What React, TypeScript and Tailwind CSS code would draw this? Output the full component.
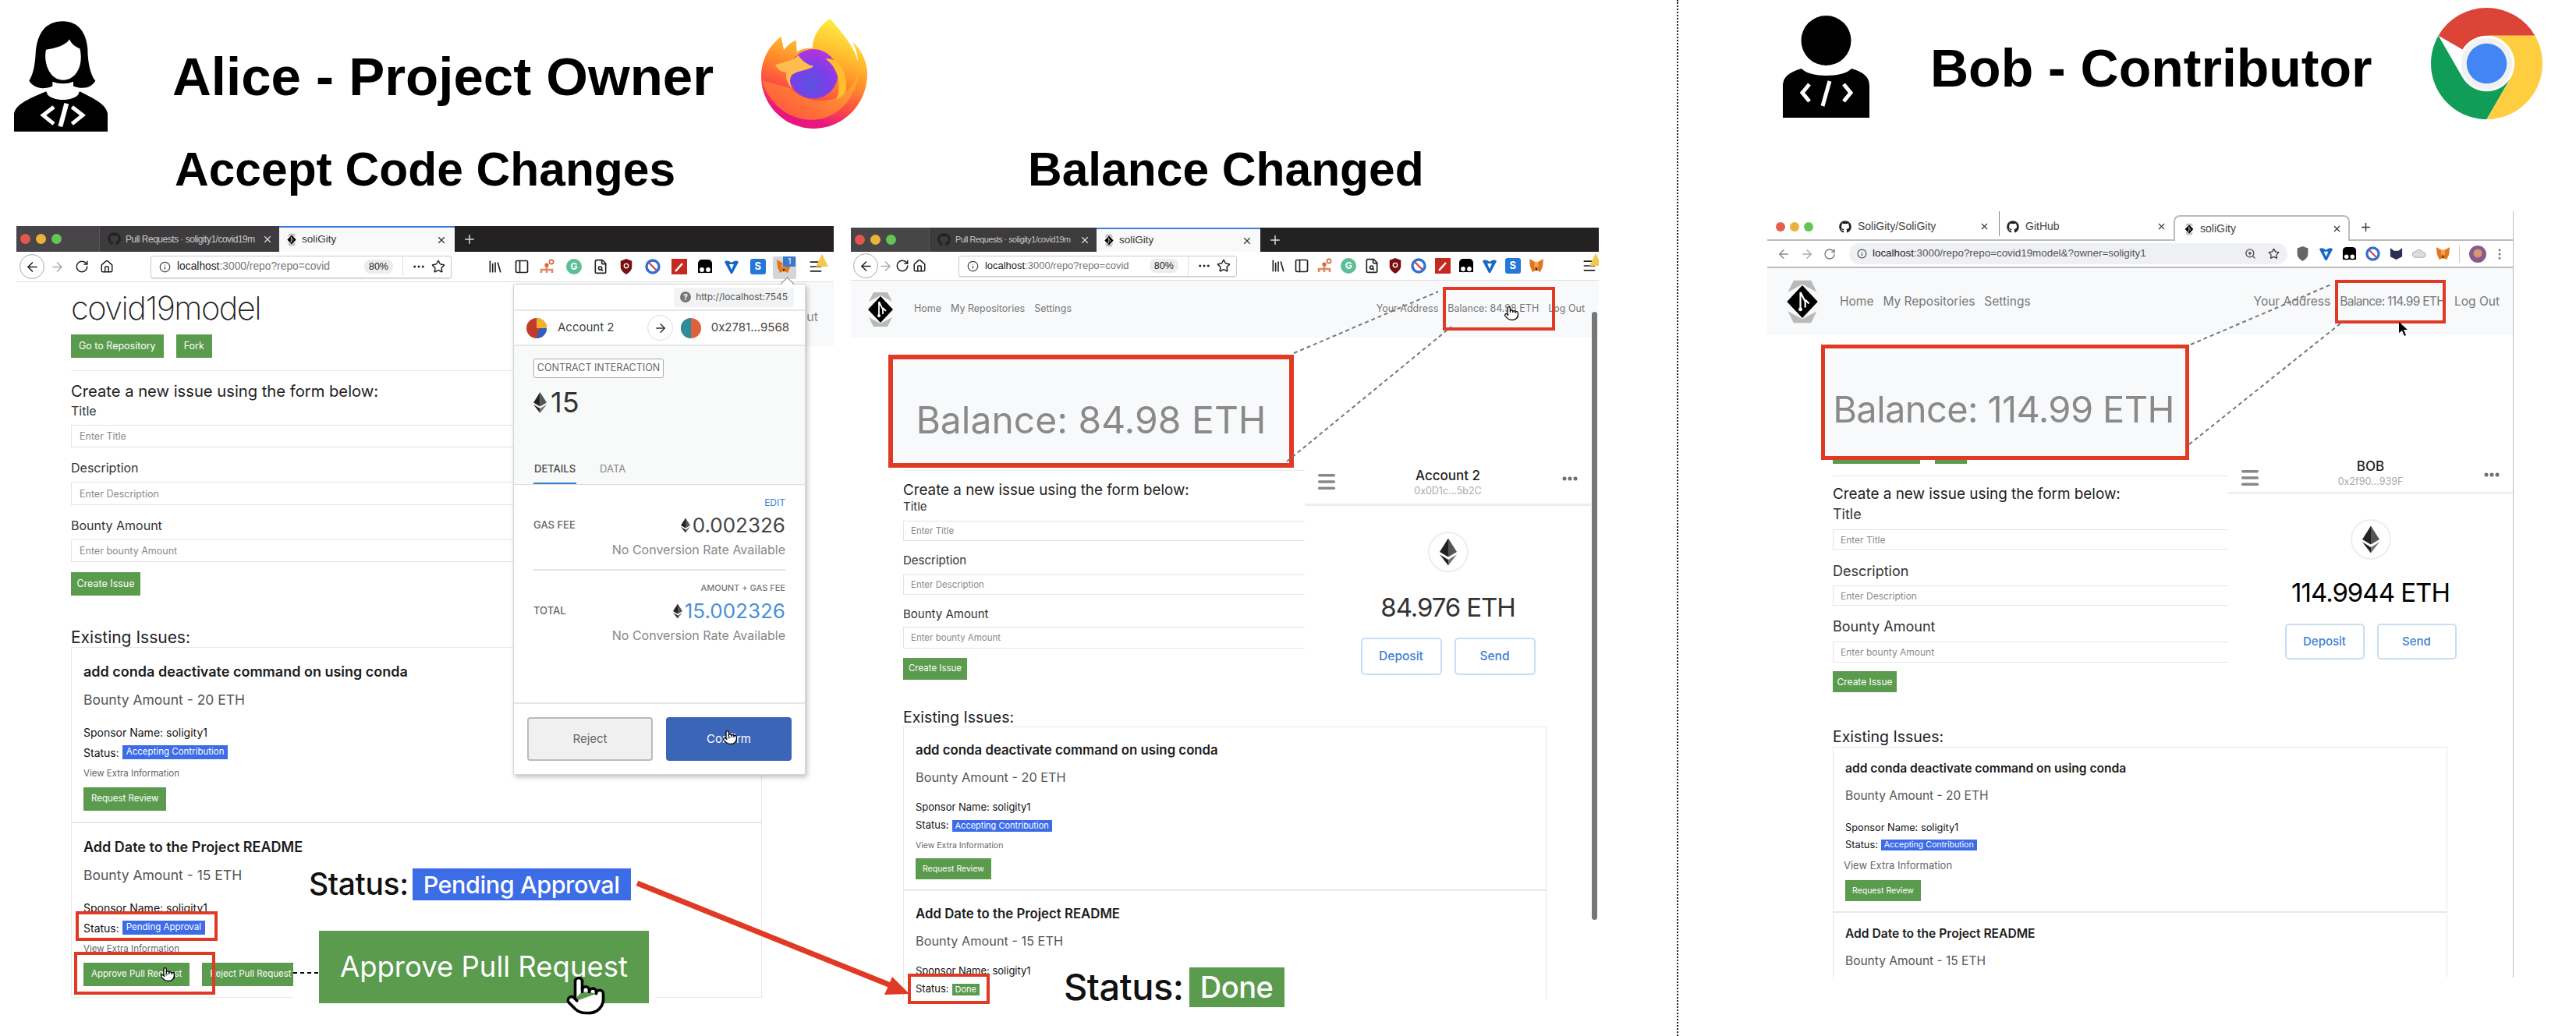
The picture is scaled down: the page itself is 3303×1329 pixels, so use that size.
import { ArrowLeft, ArrowRight, Ellipsis, FileSearch, Home, Info, Library, Menu, MoreVertical, PanelLeft, Plus, Pointer, RotateCw, Star, X, ZoomIn } from 'lucide-react';
import { FaGithub } from 'react-icons/fa';

const GREEN = 'bg-[#5b9b4e]';
const BLUE = 'bg-[#3c6ce6]';

// per window text and spacing, the three screenshots were pasted at different scales
const leftScale = {
  heading: 'h-[24px] text-[20.2px] mt-[14px]',
  label: 'text-[16px]',
  title: 'h-[26px]',
  input: 'text-[12.5px] pl-[10px]',
  in1: 'mt-[5px] h-[29px]',
  l2: 'mt-[13px] h-[26px]',
  in2: 'mt-[5px] h-[30px]',
  l3: 'mt-[13px] h-[26px]',
  in3: 'mt-[5px] h-[29px]',
  create: 'mt-[13px] h-[30px] w-[89px] text-[12.5px]',
  existing: 'mt-[42px] h-[24px] text-[21px]',
};
const midScale = {
  heading: 'h-[22px] text-[18.8px] mt-[14px]',
  label: 'text-[15px]',
  title: 'h-[20px]',
  input: 'text-[11.5px] pl-[9px]',
  in1: 'mt-[8px] h-[26px]',
  l2: 'mt-[15px] h-[20px]',
  in2: 'mt-[8px] h-[26px]',
  l3: 'mt-[15px] h-[20px]',
  in3: 'mt-[6px] h-[28px]',
  create: 'mt-[12px] h-[28px] w-[82px] text-[11.5px]',
  existing: 'mt-[38px] h-[22px] text-[19.5px]',
};
const rightScale = {
  heading: 'h-[24px] text-[18.9px] mt-[11px]',
  label: 'text-[18px]',
  title: 'h-[26px]',
  input: 'text-[12px] pl-[9px]',
  in1: 'mt-[7px] h-[26px]',
  l2: 'mt-[14px] h-[26px]',
  in2: 'mt-[6px] h-[26px]',
  l3: 'mt-[13px] h-[26px]',
  in3: 'mt-[7px] h-[27px]',
  create: 'mt-[11px] h-[27px] w-[82px] text-[12px]',
  existing: 'mt-[46px] h-[24px] text-[19.5px]',
};

const leftCard = {
  box: 'h-[225px] pl-[15px] pt-[18px]',
  title: 'h-[24px] text-[18px]',
  bounty: 'mt-[13px] h-[24px] text-[17.5px]',
  sponsor: 'mt-[18px] h-[22px] text-[14px]',
  status: 'mt-[4px] h-[22px] text-[14px]',
  badge: 'text-[11.5px] px-[5px] h-[18px]',
  view: 'mt-[7px] h-[20px] text-[11.5px]',
  btnRow: 'mt-[7px] h-[30px]',
  btn: 'text-[11.5px] px-[10px]',
};
const midCard = {
  box: 'h-[210px] pl-[15px] pt-[18px]',
  title: 'h-[24px] text-[16.8px]',
  bounty: 'mt-[10px] h-[24px] text-[16.3px]',
  sponsor: 'mt-[16px] h-[22px] text-[13px]',
  status: 'mt-[1px] h-[22px] text-[13px]',
  badge: 'text-[11px] px-[4px] h-[15px]',
  view: 'mt-[5px] h-[20px] text-[10.5px]',
  btnRow: 'mt-[6px] h-[27px]',
  btn: 'text-[10.5px] px-[9px]',
};
const rightCard = {
  box: 'h-[212px] pl-[15px] pt-[15px]',
  title: 'h-[24px] text-[15.6px]',
  bounty: 'mt-[11px] h-[24px] text-[15.5px]',
  sponsor: 'mt-[18px] h-[22px] text-[12.8px]',
  status: 'mt-0 h-[22px] text-[12.8px]',
  badge: 'text-[10.5px] px-[4px] h-[14px]',
  view: 'mt-[6px] h-[20px] text-[13px] -ml-[2px]',
  btnRow: 'mt-[8px] h-[27px]',
  btn: 'text-[10.5px] px-[9px]',
};

type CardScale = typeof leftCard;
type FormScale = typeof leftScale;

function Logo({ className }: { className: string }) {
  return (
    <svg viewBox="0 0 34 48" className={className}>
      <polygon points="8,2 26,2 32,14 17,6 2,14" fill="#b9b9b9" />
      <polygon points="2,34 17,42 32,34 26,46 8,46" fill="#b9b9b9" />
      <polygon points="17,7 33,24 17,41 1,24" fill="#000" />
      <path d="M15 14 L20 24 V30 M15 14 V32 M20 22 L24 26" stroke="#fff" strokeWidth="1.8" fill="none" />
      <circle cx="15" cy="32" r="2" fill="#fff" />
    </svg>
  );
}

function EthMark({ className, dark = '#222' }: { className: string; dark?: string }) {
  return (
    <svg viewBox="0 0 20 32" className={className}>
      <polygon points="10,0 0,16 10,22" fill={dark} />
      <polygon points="10,0 20,16 10,22" fill="#555" />
      <polygon points="0,19 10,32 10,25" fill={dark} />
      <polygon points="20,19 10,32 10,25" fill="#777" />
    </svg>
  );
}

function Fox({ className }: { className: string }) {
  return (
    <svg viewBox="0 0 20 20" className={className}>
      <polygon points="1,1 8,5 12,5 19,1 18,11 15,18 11,16 9,16 5,18 2,11" fill="#e2761b" />
      <polygon points="8,5 12,5 13,11 7,11" fill="#f6a45c" />
      <polygon points="9,16 11,16 11,13 9,13" fill="#3a2a1d" />
    </svg>
  );
}

function Ghost({ className }: { className: string }) {
  return (
    <svg viewBox="0 0 20 20" className={className}>
      <path d="M1 18 V6 a5 5 0 0 1 5 -5 H14 a5 5 0 0 1 5 5 V18Z" fill="#000" />
      <circle cx="6" cy="14" r="3.6" fill="#fff" stroke="#000" strokeWidth="1.4" />
      <circle cx="14" cy="14" r="3.6" fill="#fff" stroke="#000" strokeWidth="1.4" />
    </svg>
  );
}

function BanMark({ className }: { className: string }) {
  return (
    <svg viewBox="0 0 20 20" className={className}>
      <circle cx="10" cy="10" r="8" fill="#fff" stroke="#2f6fd0" strokeWidth="3.4" />
      <path d="M5 5 L15 15" stroke="#c94f5a" strokeWidth="2.4" />
    </svg>
  );
}

function Gem({ className }: { className: string }) {
  return (
    <svg viewBox="0 0 20 20" className={className}>
      <path d="M1 4 C4 1 7 3 10 5 C13 3 16 1 19 4 L11 19 H9Z" fill="#1668c7" />
      <path d="M7 7 L10 14 L13 7Z" fill="#fff" />
    </svg>
  );
}

function AliceIcon() {
  return (
    <svg viewBox="52 35 360 425" className="mt-[27px] h-[142px] w-[120px] shrink-0">
      <path d="M240 35 C170 35 140 85 135 160 C132 210 125 240 110 265 C130 295 165 300 200 285 L280 285 C320 300 350 290 365 265 C345 240 335 190 335 140 C330 80 300 35 240 35Z" fill="#000" />
      <path d="M52 460 V390 C60 350 120 330 175 305 C200 345 280 345 305 305 C350 330 405 350 412 390 V460Z" fill="#000" />
      <path d="M265 105 C250 130 205 140 175 145 C165 190 185 260 240 262 C295 260 320 200 305 140 C290 135 275 125 265 105Z" fill="#fff" />
      <path d="M200 268 C225 278 255 278 280 268 L280 300 L302 314 C280 345 200 345 178 314 L200 300Z" fill="#fff" />
      <path d="M205 365 L164 397 L205 430 M275 365 L316 397 L275 430" stroke="#fff" strokeWidth="15" fill="none" />
      <path d="M254 352 L230 440" stroke="#fff" strokeWidth="18" />
    </svg>
  );
}

function BobIcon() {
  return (
    <svg viewBox="0 0 111 131" className="mt-[20px] h-[131px] w-[111px] shrink-0">
      <ellipse cx="55.5" cy="32" rx="32" ry="32" fill="#000" />
      <path d="M0 131 V90 C0 78 10 72 24 68 C34 80 78 80 88 68 C102 72 111 78 111 90 V131Z" fill="#000" />
      <path d="M34 88 L25 99 L34 110 M78 88 L87 99 L78 110" stroke="#fff" strokeWidth="5" fill="none" />
      <path d="M60 84 L51 116" stroke="#fff" strokeWidth="5" />
    </svg>
  );
}

function FirefoxLogo() {
  return (
    <svg viewBox="48 28 407 422" className="mt-[24px] h-[141px] w-[136px] shrink-0">
      <defs>
        <linearGradient id="ffOuter" x1="0.72" y1="0" x2="0.38" y2="1">
          <stop offset="0" stopColor="#fff044" />
          <stop offset="0.28" stopColor="#ffc02e" />
          <stop offset="0.5" stopColor="#ff8a2a" />
          <stop offset="0.72" stopColor="#ff4a45" />
          <stop offset="0.9" stopColor="#e8177f" />
        </linearGradient>
        <radialGradient id="ffBall" cx="0.45" cy="0.72" r="0.75">
          <stop offset="0" stopColor="#5a52e0" />
          <stop offset="0.5" stopColor="#7a3fe8" />
          <stop offset="1" stopColor="#bb33dd" />
        </radialGradient>
        <linearGradient id="ffSwoosh" x1="0.9" y1="0.1" x2="0.2" y2="0.9">
          <stop offset="0" stopColor="#ffb52e" />
          <stop offset="1" stopColor="#ff5a3c" />
        </linearGradient>
      </defs>
      <path d="M125 97 C85 125 48 180 48 250 C48 360 140 450 250 450 C360 450 455 360 455 240 C455 190 430 145 400 118 C412 150 420 170 418 190 C415 170 395 120 312 28 C270 55 245 100 245 140 C220 140 200 145 185 155 L182 110 C160 120 145 135 135 148Z" fill="url(#ffOuter)" />
      <path d="M52 265 C75 350 150 418 245 416 C350 414 430 320 428 180 C425 260 395 300 340 330 C300 350 210 350 160 295Z" fill="url(#ffSwoosh)" />
      <circle cx="248" cy="240" r="95" fill="url(#ffBall)" />
      <path d="M295 182 C335 175 378 215 374 300 C368 320 352 332 335 338 C356 300 352 222 295 182Z" fill="#ffbe2e" />
      <path d="M102 205 C130 195 170 192 190 168 C205 190 225 205 250 210 C230 228 190 225 165 245 C155 260 158 280 168 298 C150 280 138 252 146 234 C125 234 110 222 102 205Z" fill="#ffbd4f" />
    </svg>
  );
}

function ChromeLogo() {
  return (
    <svg viewBox="0 0 100 100" className="mt-[10px] h-[143px] w-[145px] shrink-0">
      <path d="M50 0 A50 50 0 0 1 93.3 25 H50 A25 25 0 0 0 28.3 37.5 L6.7 25 A50 50 0 0 1 50 0Z" fill="#db4437" />
      <path d="M6.7 25 A50 50 0 0 0 50 100 L71.65 62.5 A25 25 0 0 1 28.35 62.5Z" fill="#0f9d58" />
      <path d="M93.3 25 H50 A25 25 0 0 1 71.65 62.5 L50 100 A50 50 0 0 0 93.3 25Z" fill="#ffcd40" />
      <circle cx="50" cy="50" r="23" fill="#f1f1f1" />
      <circle cx="50" cy="50" r="18" fill="#4285f4" />
    </svg>
  );
}

function FirefoxTabs({ height, dots, tabW, tabText, activeW }: { height: string; dots: string; tabW: string; tabText: string; activeW: string }) {
  return (
    <div className={`flex items-stretch bg-[#232122] ${height}`}>
      <div className={`flex items-center gap-[7px] border-r border-[#555] bg-[#484548] pl-[5px] ${dots}`}>
        <span className="size-[13px] rounded-full bg-[#e2564f]" />
        <span className="size-[13px] rounded-full bg-[#e9b23c]" />
        <span className="size-[13px] rounded-full bg-[#62c554]" />
      </div>
      <div className={`flex items-center gap-[6px] bg-[#3d3b3d] pl-[10px] pr-[8px] ${tabW}`}>
        <FaGithub className="size-[17px] shrink-0 text-[#222]" />
        <span className={`flex-1 whitespace-nowrap tracking-[-0.5px] text-[#c9c9c9] [font-family:'Liberation_Sans'] ${tabText}`}>Pull Requests · soligity1/covid19m</span>
        <X className="size-[14px] shrink-0 text-[#ddd]" />
      </div>
      <div className={`flex items-center gap-[7px] border-t-[2px] border-[#3f7be5] bg-[#f9f9fa] pl-[10px] pr-[10px] ${activeW}`}>
        <Logo className="h-[17px] w-[12px] shrink-0" />
        <span className="flex-1 text-[13.5px] text-[#333] [font-family:'Liberation_Sans']">soliGity</span>
        <X className="size-[14px] shrink-0 text-[#333]" />
      </div>
      <div className="flex items-center pl-[10px]">
        <Plus className="size-[18px] text-[#ddd]" />
      </div>
    </div>
  );
}

function FirefoxExtensions({ cell, badge }: { cell: string; badge?: boolean }) {
  const icon = 'size-[20px]';
  return (
    <>
      <div className={`flex justify-center ${cell}`}><Library className={`${icon} text-[#222]`} /></div>
      <div className={`flex justify-center ${cell}`}><PanelLeft className={`${icon} text-[#222]`} /></div>
      <div className={`flex justify-center ${cell}`}>
        <svg viewBox="0 0 20 20" className={icon}><circle cx="15" cy="4" r="2.6" fill="none" stroke="#d9653b" strokeWidth="1.6" /><circle cx="9" cy="8" r="2.6" fill="#d9653b" /><path d="M2 18 V14 H16 V18 M9 10 V18 M5 18 h0" stroke="#e08a65" strokeWidth="2.6" fill="none" /></svg>
      </div>
      <div className={`flex justify-center ${cell}`}><span className="flex size-[20px] items-center justify-center rounded-full bg-[#5cbf95] text-[12px] font-bold text-white">G</span></div>
      <div className={`flex justify-center ${cell}`}><FileSearch className={`${icon} text-[#222]`} /></div>
      <div className={`flex justify-center ${cell}`}>
        <svg viewBox="0 0 20 22" className={icon}><path d="M10 0 L18 3 V11 C18 17 13 20 10 22 C7 20 2 17 2 11 V3Z" fill="#7a0f0f" /><circle cx="10" cy="10" r="3" fill="none" stroke="#fff" strokeWidth="1.5" /></svg>
      </div>
      <div className={`flex justify-center ${cell}`}><BanMark className={icon} /></div>
      <div className={`flex justify-center ${cell}`}>
        <svg viewBox="0 0 20 20" className={icon}><rect width="20" height="20" fill="#c52a21" /><path d="M5 16 L14 6" stroke="#fff" strokeWidth="2.5" /></svg>
      </div>
      <div className={`flex justify-center ${cell}`}><Ghost className={icon} /></div>
      <div className={`flex justify-center ${cell}`}><Gem className={icon} /></div>
      <div className={`flex justify-center ${cell}`}><span className="flex size-[20px] items-center justify-center rounded-[3px] bg-[#2477d6] text-[13px] font-bold text-white">S</span></div>
      <div className={`relative flex justify-center ${cell}`}>
        {badge && <span className="absolute -top-[3px] left-[2px] h-[29px] w-[30px] rounded-[3px] bg-[#d5d6d8]" />}
        <Fox className={`relative ${icon}`} />
        {badge && <span className="absolute -top-[3px] right-[2px] h-[13px] w-[16px] bg-[#3b78c9] text-center text-[10px] leading-[13px] text-white">1</span>}
      </div>
    </>
  );
}

function FirefoxToolbar({ box, navCell, urlBar, urlText, urlGap, extCell, menuGap, badge }: { box: string; navCell: string; urlBar: string; urlText: string; urlGap: string; extCell: string; menuGap: string; badge?: boolean }) {
  return (
    <div className={`flex items-center border-b border-[#dedede] bg-white pl-[4px] ${box}`}>
      <div className={`flex justify-center ${navCell}`}>
        <span className="flex size-[32px] shrink-0 items-center justify-center rounded-full border border-[#aaa]"><ArrowLeft className="size-[19px] text-[#222]" /></span>
      </div>
      <div className={`flex justify-center ${navCell}`}><ArrowRight className="size-[19px] text-[#aaa]" /></div>
      <div className={`flex justify-center ${navCell}`}><RotateCw className="size-[18px] text-[#222]" /></div>
      <div className={`flex justify-center ${navCell}`}><Home className="size-[18px] text-[#222]" /></div>
      <div className={`flex items-center rounded-[3px] border border-[#ccc] pl-[10px] pr-[7px] shadow-[0_1px_1px_#ddd] ${urlBar}`}>
        <Info className="size-[15px] shrink-0 text-[#444]" />
        <span className={`ml-[8px] flex-1 whitespace-nowrap text-[#222] [font-family:'Liberation_Sans'] ${urlText}`}>localhost<span className="text-[#777]">:3000/repo?repo=covid</span></span>
        <span className="rounded-[8px] bg-[#ececec] px-[6px] text-[12.5px] text-[#222] [font-family:'Liberation_Sans']">80%</span>
        <span className="ml-[12px] h-[24px] border-l border-[#ddd]" />
        <Ellipsis className="ml-[11px] size-[18px] text-[#222]" />
        <Star className="ml-[7px] size-[18px] text-[#222]" />
      </div>
      <div className={urlGap} />
      <FirefoxExtensions cell={extCell} badge={badge} />
      <div className={`relative flex justify-center ${menuGap}`}>
        <Menu className="size-[20px] text-[#222]" />
        <svg viewBox="0 0 16 16" className="absolute -top-[6px] left-[12px] size-[16px]"><polygon points="8,0 16,16 0,16" fill="#f4c84a" /></svg>
      </div>
    </div>
  );
}

function SiteNav({ box, logo, links, balance, balanceText }: { box: string; logo: string; links: string; balance: string; balanceText: string }) {
  return (
    <div className={`flex items-center bg-[#f8f9fa] whitespace-nowrap text-[#777] ${box} ${links}`}>
      <Logo className={logo} />
      <span>Home</span>
      <span>My Repositories</span>
      <span>Settings</span>
      <span className="ml-auto">Your Address</span>
      <span className={balanceText}>{balance}</span>
      <span>Log Out</span>
    </div>
  );
}

function Field({ label, labelBox, labelText, inputBox, inputText, placeholder }: { label: string; labelBox: string; labelText: string; inputBox: string; inputText: string; placeholder: string }) {
  return (
    <>
      <div className={`flex items-center text-[#333] ${labelBox} ${labelText}`}>{label}</div>
      <input readOnly placeholder={placeholder} className={`block w-full border border-[#e4e4e4] bg-white outline-none placeholder:text-[#8a8a8a] ${inputBox} ${inputText}`} />
    </>
  );
}

function IssueForm({ s }: { s: FormScale }) {
  return (
    <>
      <div className={`flex items-center text-[#222] ${s.heading}`}>Create a new issue using the form below:</div>
      <Field label="Title" labelBox={s.title} labelText={s.label} inputBox={s.in1} inputText={s.input} placeholder="Enter Title" />
      <Field label="Description" labelBox={s.l2} labelText={s.label} inputBox={s.in2} inputText={s.input} placeholder="Enter Description" />
      <Field label="Bounty Amount" labelBox={s.l3} labelText={s.label} inputBox={s.in3} inputText={s.input} placeholder="Enter bounty Amount" />
      <div className={`flex items-center justify-center text-white ${GREEN} ${s.create}`}>Create Issue</div>
      <div className={`flex items-center text-[#222] ${s.existing}`}>Existing Issues:</div>
    </>
  );
}

function IssueCard({ s, name, amount, status, statusClass, clipped, children }: { s: CardScale; name: string; amount: string; status: string; statusClass: string; clipped?: boolean; children?: React.ReactNode }) {
  return (
    <div className={`border border-[#e8e8e8] ${s.box}`}>
      <div className={`flex items-center font-semibold whitespace-nowrap text-[#1c1c1c] ${s.title}`}>{name}</div>
      <div className={`flex items-center text-[#555] ${s.bounty}`}>{amount}</div>
      {!clipped && (
        <>
          <div className={`flex items-center text-[#111] ${s.sponsor}`}>Sponsor Name: soligity1</div>
          <div className={`flex items-center gap-[4px] text-[#111] ${s.status}`}>
            Status:
            <span className={`flex items-center whitespace-nowrap text-white ${statusClass} ${s.badge}`}>{status}</span>
          </div>
          <div className={`flex items-center text-[#666] ${s.view}`}>View Extra Information</div>
          <div className={`flex items-stretch gap-[16px] ${s.btnRow}`}>{children}</div>
        </>
      )}
    </div>
  );
}

function GreenButton({ label, cls }: { label: string; cls: string }) {
  return <span className={`flex items-center whitespace-nowrap text-white ${GREEN} ${cls}`}>{label}</span>;
}

function MetaMaskPopup() {
  return (
    <div className="absolute top-[74px] left-[637px] flex h-[630px] w-[375px] flex-col rounded-[2px] border border-[#d6d6d6] bg-white shadow-[2px_3px_6px_rgba(0,0,0,0.25)]">
      <span className="absolute -top-[7px] left-[344px] size-[13px] rotate-45 border-t border-l border-[#888] bg-white" />
      <div className="flex h-[34px] items-center justify-end border-b-[2px] border-[#e6e6e6] pr-[14px]">
        <span className="flex h-[25px] items-center gap-[6px] rounded-[4px] bg-[#f2f3f4] px-[8px] text-[12px] text-[#555]">
          <span className="flex size-[14px] items-center justify-center rounded-full bg-[#777] text-[10px] font-bold text-white">?</span>
          http://localhost:7545
        </span>
      </div>
      <div className="relative flex h-[45px] items-center border-b-[2px] border-[#e6e6e6] pl-[16px] pr-[20px] text-[15px] text-[#444]">
        <svg viewBox="0 0 26 26" className="size-[26px] shrink-0">
          <circle cx="13" cy="13" r="13" fill="#c23a2b" />
          <path d="M13 0 A13 13 0 0 1 26 13 L13 13Z" fill="#f3b323" />
          <path d="M26 13 A13 13 0 0 1 13 26 L17 13Z" fill="#2b5fc1" />
        </svg>
        <span className="ml-[14px]">Account 2</span>
        <span className="absolute top-[5px] left-[171px] flex size-[33px] items-center justify-center rounded-full border border-[#ddd] bg-white"><ArrowRight className="size-[18px] text-[#333]" /></span>
        <svg viewBox="0 0 26 26" className="ml-auto size-[26px] shrink-0">
          <circle cx="13" cy="13" r="13" fill="#e0603a" />
          <path d="M13 0 A13 13 0 0 0 13 26Z" fill="#2b8f9b" />
        </svg>
        <span className="ml-[13px]">0x2781...9568</span>
      </div>
      <div className="flex h-[177px] flex-col bg-[#f8f9f9] pl-[25px]">
        <span className="mt-[16px] flex h-[25px] w-[167px] items-center justify-center rounded-[3px] border border-[#aaa] bg-white text-[12.5px] whitespace-nowrap text-[#666]">CONTRACT INTERACTION</span>
        <div className="mt-[10px] flex items-center gap-[5px] text-[36px] leading-[42px] text-[#333]">
          <EthMark className="h-[27px] w-[17px]" />
          15
        </div>
        <div className="mt-auto flex gap-[30px] text-[13px]">
          <span className="border-b-[2px] border-[#3b7fd1] px-[1px] pb-[8px] font-medium text-[#444]">DETAILS</span>
          <span className="text-[#888]">DATA</span>
        </div>
      </div>
      <div className="flex flex-1 flex-col border-t border-[#ddd] px-[25px] text-[#888]">
        <div className="mt-[15px] text-right text-[12px] leading-[16px] text-[#3b7fd1]">EDIT</div>
        <div className="mt-[5px] flex items-center justify-between">
          <span className="text-[13px] font-medium text-[#666]">GAS FEE</span>
          <span className="flex items-center gap-[3px] text-[26px] leading-[32px] text-[#444]"><EthMark className="h-[20px] w-[12px]" />0.002326</span>
        </div>
        <div className="mt-[3px] text-right text-[16px] leading-[24px]">No Conversion Rate Available</div>
        <div className="mt-[13px] border-t-[2px] border-[#e4e4e4]" />
        <div className="mt-[15px] text-right text-[11px] leading-[14px] font-medium text-[#777]">AMOUNT + GAS FEE</div>
        <div className="mt-[7px] flex items-center justify-between">
          <span className="text-[13px] font-medium text-[#666]">TOTAL</span>
          <span className="flex items-center gap-[3px] text-[26px] leading-[32px] text-[#4a90d9]"><EthMark className="h-[20px] w-[12px]" />15.002326</span>
        </div>
        <div className="mt-[3px] text-right text-[16px] leading-[24px]">No Conversion Rate Available</div>
      </div>
      <div className="flex h-[92px] items-start gap-[17px] border-t-[2px] border-[#e6e6e6] px-[17px] pt-[17px] text-[15px]">
        <span className="flex h-[56px] w-[162px] items-center justify-center rounded-[4px] border-[2px] border-[#bbb] bg-[#f0f0f0] text-[#666]">Reject</span>
        <span className="relative flex h-[56px] w-[162px] items-center justify-center rounded-[4px] bg-[#3b66b8] text-white">
          Confirm
          <Pointer className="absolute top-[16px] left-[72px] size-[20px] fill-white text-black" strokeWidth={1.5} />
        </span>
      </div>
    </div>
  );
}

function WalletPanel({ box, name, address, balance, nameTop, dial, balanceText, buttons, btn }: { box: string; name: string; address: string; balance: string; nameTop: string; dial: string; balanceText: string; buttons: string; btn: string }) {
  return (
    <div className={`absolute flex flex-col items-center bg-white ${box}`}>
      <div className={`relative flex w-full flex-col items-center border-b-[3px] border-[#eee] ${nameTop}`}>
        <Menu className="absolute top-[12px] left-[14px] size-[28px] text-[#888]" strokeWidth={3} />
        <span className="text-[17px] leading-[22px] font-medium text-[#222]">{name}</span>
        <span className="text-[12.5px] leading-[18px] text-[#aaa]">{address}</span>
        <Ellipsis className="absolute top-[10px] right-[15px] size-[24px] text-[#666]" strokeWidth={3} />
      </div>
      <span className={`flex size-[52px] items-center justify-center rounded-full border-[2px] border-[#eee] ${dial}`}>
        <EthMark className="h-[36px] w-[22px]" />
      </span>
      <div className={`whitespace-nowrap ${balanceText}`}>{balance}</div>
      <div className={`flex gap-[16px] ${buttons}`}>
        <span className={`flex items-center justify-center rounded-[5px] border-[2px] border-[#c9def2] font-medium text-[#3b7fd1] ${btn}`}>Deposit</span>
        <span className={`flex items-center justify-center rounded-[5px] border-[2px] border-[#c9def2] font-medium text-[#3b7fd1] ${btn}`}>Send</span>
      </div>
    </div>
  );
}

function RedBox({ className }: { className: string }) {
  return <div className={`absolute border-[#e03a25] ${className}`} />;
}

function Overlay() {
  const red = '#e03a25';
  return (
    <svg viewBox="0 0 3303 1329" className="pointer-events-none absolute top-0 left-0 h-[1329px] w-[3303px]">
      <line x1="817" y1="1133" x2="1142" y2="1264" stroke={red} strokeWidth="7" />
      <polygon points="1134,1276 1166,1275 1144,1253" fill={red} />
      <line x1="376" y1="1248" x2="408" y2="1248" stroke="#000" strokeWidth="2" strokeDasharray="5 4" />
      <g stroke="#777" strokeWidth="2" strokeDasharray="5 4">
        <line x1="1659" y1="453" x2="1844" y2="374" />
        <line x1="1650" y1="592" x2="1861" y2="419" />
        <line x1="2809" y1="442" x2="2989" y2="365" />
        <line x1="2807" y1="570" x2="3006" y2="411" />
      </g>
    </svg>
  );
}

export default function App() {
  return (
    <div className="relative h-[1329px] w-[3303px] overflow-hidden bg-white font-['Inter',sans-serif]">
      <div className="flex h-full">
        {/* Left half: Alice */}
        <section className="h-full w-[2152px] shrink-0 border-r-[2px] border-dotted border-[#222]">
          <div className="flex h-[170px] w-[1112px] items-start pl-[18px] [font-family:'Liberation_Sans']">
            <AliceIcon />
            <h1 className="mt-[62px] ml-[83px] text-[69px] leading-[74px] font-bold whitespace-nowrap text-black">Alice - Project Owner</h1>
            <div className="ml-auto"><FirefoxLogo /></div>
          </div>
          <div className="flex h-[120px] pt-[22px] text-[60.5px] leading-[50px] font-bold text-black [font-family:'Liberation_Sans']">
            <h2 className="ml-[224px] w-[1094px] whitespace-nowrap">Accept Code Changes</h2>
            <h2 className="whitespace-nowrap">Balance Changed</h2>
          </div>
          <div className="flex items-start gap-[22px] pl-[21px]">
            {/* Firefox window, accept */}
            <div className="relative h-[990px] w-[1048px] shrink-0 overflow-hidden">
              <FirefoxTabs height="h-[33px]" dots="w-[107px]" tabW="w-[230px]" tabText="text-[12px]" activeW="w-[225px]" />
              <FirefoxToolbar box="h-[39px]" navCell="w-[32px]" urlBar="ml-[40px] h-[29px] w-[386px] shrink-0" urlText="text-[13.8px]" urlGap="w-[39px] shrink-0" extCell="w-[33.7px] shrink-0" menuGap="ml-[12px] w-[24px] shrink-0" badge />
              <div className="relative pl-[70px]">
                <div className="absolute top-0 right-0 h-[82px] w-[60px] bg-[#f8f9fa] pr-[20px] text-right text-[16px] leading-[88px] text-[#888]">ut</div>
                <div className="flex h-[67px] items-center text-[41.5px] font-extralight tracking-[-1.5px] text-[#222]">covid19model</div>
                <div className="flex h-[30px] gap-[16px] text-[12.5px]">
                  <GreenButton label="Go to Repository" cls="px-[10px]" />
                  <GreenButton label="Fork" cls="px-[10px]" />
                </div>
                <div className="mt-[16px] w-[886px] border-t border-[#e8e8e8]" />
                <div className="w-[886px]"><IssueForm s={leftScale} /></div>
                <div className="w-[886px]">
                  <IssueCard s={leftCard} name="add conda deactivate command on using conda" amount="Bounty Amount - 20 ETH" status="Accepting Contribution" statusClass={BLUE}>
                    <GreenButton label="Request Review" cls={leftCard.btn} />
                  </IssueCard>
                  <IssueCard s={leftCard} name="Add Date to the Project README" amount="Bounty Amount - 15 ETH" status="Pending Approval" statusClass={BLUE}>
                    <GreenButton label="Approve Pull Request" cls={leftCard.btn} />
                    <GreenButton label="Reject Pull Request" cls={leftCard.btn} />
                  </IssueCard>
                </div>
              </div>
              <MetaMaskPopup />
            </div>
            {/* Firefox window, balance */}
            <div className="relative mt-[2px] h-[990px] w-[959px] shrink-0 overflow-hidden">
              <FirefoxTabs height="h-[31px]" dots="w-[101px]" tabW="w-[214px]" tabText="text-[10.8px]" activeW="w-[210px]" />
              <FirefoxToolbar box="h-[37px]" navCell="w-[30px]" urlBar="ml-[39px] h-[27px] w-[357px] shrink-0" urlText="text-[13px]" urlGap="w-[38px] shrink-0" extCell="w-[30.1px] shrink-0" menuGap="ml-[41px] w-[24px] shrink-0" />
              <SiteNav box="h-[73px] pl-[21px] pr-[18px] gap-[12px]" logo="mr-[14px] h-[48px] w-[34px]" links="text-[12.5px]" balance="Balance: 84.98 ETH" balanceText="" />
              <div className="relative pl-[67px]">
                <div className="mt-[170px] w-[825px] border-t border-[#e8e8e8]" />
                <div className="w-[825px]"><IssueForm s={midScale} /></div>
                <div className="w-[825px]">
                  <IssueCard s={midCard} name="add conda deactivate command on using conda" amount="Bounty Amount - 20 ETH" status="Accepting Contribution" statusClass={BLUE}>
                    <GreenButton label="Request Review" cls={midCard.btn} />
                  </IssueCard>
                  <IssueCard s={midCard} name="Add Date to the Project README" amount="Bounty Amount - 15 ETH" status="Done" statusClass={GREEN}>
                    <GreenButton label="Request Review" cls={midCard.btn} />
                  </IssueCard>
                </div>
              </div>
              <WalletPanel box="top-[300px] left-[582px] h-[300px] w-[367px]" name="Account 2" address="0x0D1c...5b2C" balance="84.976 ETH" nameTop="h-[57px] pt-[7px]" dial="mt-[33px]" balanceText="mt-[23px] text-[33px] leading-[44px] tracking-[-1.1px] text-[#333]" buttons="mt-[17px]" btn="h-[48px] w-[104px] text-[15.5px]" />
              <div className="absolute top-[108px] right-[2px] h-[780px] w-[7px] rounded-full bg-[#777]" />
            </div>
          </div>
        </section>

        {/* Right half: Bob */}
        <section className="h-full flex-1">
          <div className="flex h-[271px] w-[1109px] items-start pl-[134px] [font-family:'Liberation_Sans']">
            <BobIcon />
            <h1 className="mt-[50px] ml-[78px] text-[68px] leading-[74px] font-bold whitespace-nowrap text-black">Bob - Contributor</h1>
            <div className="ml-auto"><ChromeLogo /></div>
          </div>
          <div className="relative ml-[114px] h-[983px] w-[957px] overflow-hidden border-r border-[#bbb]">
            <div className="flex h-[38px] items-end border-b-[2px] border-[#bbb] text-[14px] text-[#444] [font-family:'Liberation_Sans']">
              <div className="flex h-[36px] w-[92px] shrink-0 items-center justify-start gap-[6px] self-start pt-[4px] pl-[11px]">
                <span className="size-[12px] rounded-full bg-[#e2604f]" />
                <span className="size-[12px] rounded-full bg-[#e9b23c]" />
                <span className="size-[12px] rounded-full bg-[#62c554]" />
              </div>
              <div className="flex h-[32px] w-[205px] items-center gap-[8px] self-start pt-[7px] pr-[12px]">
                <FaGithub className="size-[16px] shrink-0 text-[#222]" />
                <span className="flex-1">SoliGity/SoliGity</span>
                <X className="size-[13px] text-[#333]" />
              </div>
              <div className="flex h-[32px] w-[224px] items-center gap-[8px] self-start border-l border-[#888] pt-[7px] pr-[9px] pl-[9px]">
                <FaGithub className="size-[16px] shrink-0 text-[#222]" />
                <span className="flex-1">GitHub</span>
                <X className="size-[13px] text-[#333]" />
              </div>
              <div className="relative -mb-[2px] flex h-[33px] w-[226px] items-center gap-[8px] rounded-t-[8px] border-x-[2px] border-t-[2px] border-[#bbb] bg-white pr-[8px] pl-[12px]">
                <Logo className="h-[16px] w-[12px] shrink-0" />
                <span className="flex-1">soliGity</span>
                <X className="size-[13px] text-[#333]" />
              </div>
              <Plus className="mb-[7px] ml-[12px] size-[17px] text-[#333]" />
            </div>
            <div className="flex h-[35px] items-center border-b-[2px] border-[#bbb] pl-[12px]">
              <ArrowLeft className="size-[18px] text-[#888]" />
              <ArrowRight className="ml-[12px] size-[18px] text-[#aaa]" />
              <RotateCw className="ml-[12px] size-[16px] text-[#777]" />
              <div className="ml-[17px] flex h-[27px] w-[562px] shrink-0 items-center rounded-full bg-[#eef0f3] pr-[10px] pl-[10px]">
                <Info className="size-[13px] text-[#444]" />
                <span className="ml-[7px] flex-1 text-[13.4px] whitespace-nowrap text-[#222] [font-family:'Liberation_Sans']">localhost<span className="text-[#555]">:3000/repo?repo=covid19model&amp;?owner=soligity1</span></span>
                <ZoomIn className="size-[15px] text-[#444]" />
                <Star className="ml-[15px] size-[15px] text-[#333]" />
              </div>
              <div className="ml-[10px] flex items-center gap-[11px]">
                <svg viewBox="0 0 20 22" className="size-[19px]"><path d="M10 0 L18 3 V11 C18 17 13 20 10 22 C7 20 2 17 2 11 V3Z" fill="#666" /></svg>
                <Gem className="size-[19px]" />
                <Ghost className="size-[19px]" />
                <BanMark className="size-[19px]" />
                <svg viewBox="0 0 20 20" className="size-[19px]"><path d="M2 2 L7 6 H13 L18 2 V14 L10 18 L2 14Z" fill="#2d2f52" /></svg>
                <svg viewBox="0 0 20 20" className="size-[19px]"><path d="M4 15 a4 4 0 0 1 1 -8 a5 5 0 0 1 9 1 a3.5 3.5 0 0 1 1 7Z" fill="#ddd" stroke="#aaa" /></svg>
                <Fox className="size-[19px]" />
              </div>
              <span className="ml-[11px] h-[22px] border-l border-[#ccc]" />
              <svg viewBox="0 0 20 20" className="ml-[12px] size-[22px] shrink-0"><circle cx="10" cy="10" r="10" fill="#8a5a8f" /><circle cx="10" cy="9" r="5" fill="#d49a6f" /></svg>
              <MoreVertical className="ml-[8px] size-[18px] text-[#777]" />
            </div>
            <SiteNav box="h-[85px] pl-[24px] pr-[17px] gap-[12px]" logo="mr-[15px] h-[60px] w-[42px]" links="text-[15.5px]" balance="Balance: 114.99 ETH" balanceText="tracking-[-0.7px]" />
            <div className="relative pl-[84px]">
              <div className="mt-[136px] flex h-[30px] gap-[19px]">
                <span className={`w-[112px] ${GREEN}`} />
                <span className={`w-[41px] ${GREEN}`} />
              </div>
              <div className="mt-[15px] w-[507px] border-t border-[#e4e4e4]" />
              <div className="w-[788px]"><IssueForm s={rightScale} /></div>
              <div className="w-[788px]">
                <IssueCard s={rightCard} name="add conda deactivate command on using conda" amount="Bounty Amount - 20 ETH" status="Accepting Contribution" statusClass={BLUE}>
                  <GreenButton label="Request Review" cls={rightCard.btn} />
                </IssueCard>
                <IssueCard s={rightCard} name="Add Date to the Project README" amount="Bounty Amount - 15 ETH" status="Accepting Contribution" statusClass={BLUE} clipped />
              </div>
            </div>
            <WalletPanel box="top-[316px] left-[591px] h-[320px] w-[365px]" name="BOB" address="0x2f90...939F" balance="114.9944 ETH" nameTop="h-[47px]" dial="mt-[32px]" balanceText="mt-[20px] text-[33px] leading-[44px] tracking-[-1px] text-black" buttons="mt-[18px]" btn="h-[46px] w-[102px] text-[15px]" />
          </div>
        </section>
      </div>

      {/* callouts pasted on the slide */}
      <div className="absolute top-[1100px] left-[376px] flex h-[207px] w-[465px] flex-col items-start bg-white pl-[20px]">
        <div className="mt-[14px] flex h-[41px] items-center gap-[5px] text-[39px] font-medium tracking-[-0.4px] text-[#111]">
          Status:
          <span className={`flex h-[41px] w-[280px] items-center justify-center text-[30.5px] whitespace-nowrap text-white ${BLUE}`}>Pending Approval</span>
        </div>
        <div className={`mt-[39px] ml-[13px] flex h-[93px] w-[423px] items-center justify-center text-[36.5px] whitespace-nowrap text-white ${GREEN}`}>Approve Pull Request</div>
      </div>
      <Pointer className="absolute top-[1250px] left-[724px] size-[54px] fill-white text-black" strokeWidth={1.6} />
      <Pointer className="absolute top-[1240px] left-[205px] size-[20px] fill-white text-black" strokeWidth={1.6} />
      <div className="absolute top-[1236px] left-[1360px] flex h-[60px] items-center gap-[7px] bg-white pl-[4px] text-[47px] font-medium tracking-[-0.5px] text-[#111]">
        Status:
        <span className={`flex h-[51px] w-[122px] items-center justify-center text-[38px] text-white ${GREEN}`}>Done</span>
      </div>

      <RedBox className="top-[1169px] left-[97px] h-[38px] w-[182px] border-[4px]" />
      <RedBox className="top-[1221px] left-[95px] h-[55px] w-[181px] border-[4px]" />
      <RedBox className="top-[1249px] left-[1164px] h-[39px] w-[105px] border-[4px]" />

      <RedBox className="top-[368px] left-[1850px] h-[56px] w-[144px] border-[4px]" />
      <Pointer className="absolute top-[392px] left-[1928px] size-[20px] fill-white text-black" strokeWidth={1.5} />
      <div className="absolute top-[455px] left-[1139px] flex h-[145px] w-[520px] items-center justify-center border-[6px] border-[#e03a25] bg-[#f8f9fa] pt-[22px] text-[48px] whitespace-nowrap text-[#8a8a8a] blur-[0.4px]">Balance: 84.98 ETH</div>

      <RedBox className="top-[359px] left-[2994px] h-[56px] w-[142px] border-[4px]" />
      <div className="absolute top-[442px] left-[2335px] flex h-[148px] w-[472px] items-center justify-center border-[5px] border-[#e03a25] bg-[#f8f9fa] pt-[18px] pr-[4px] text-[47px] tracking-[-0.6px] whitespace-nowrap text-[#8a8a8a] blur-[0.4px]">Balance: 114.99 ETH</div>
      <svg viewBox="0 0 12 18" className="absolute top-[413px] left-[3076px] h-[18px] w-[12px]"><polygon points="0,0 0,14 4,11 7,18 9,17 6,10 11,10" fill="#000" /></svg>

      <Overlay />
    </div>
  );
}
